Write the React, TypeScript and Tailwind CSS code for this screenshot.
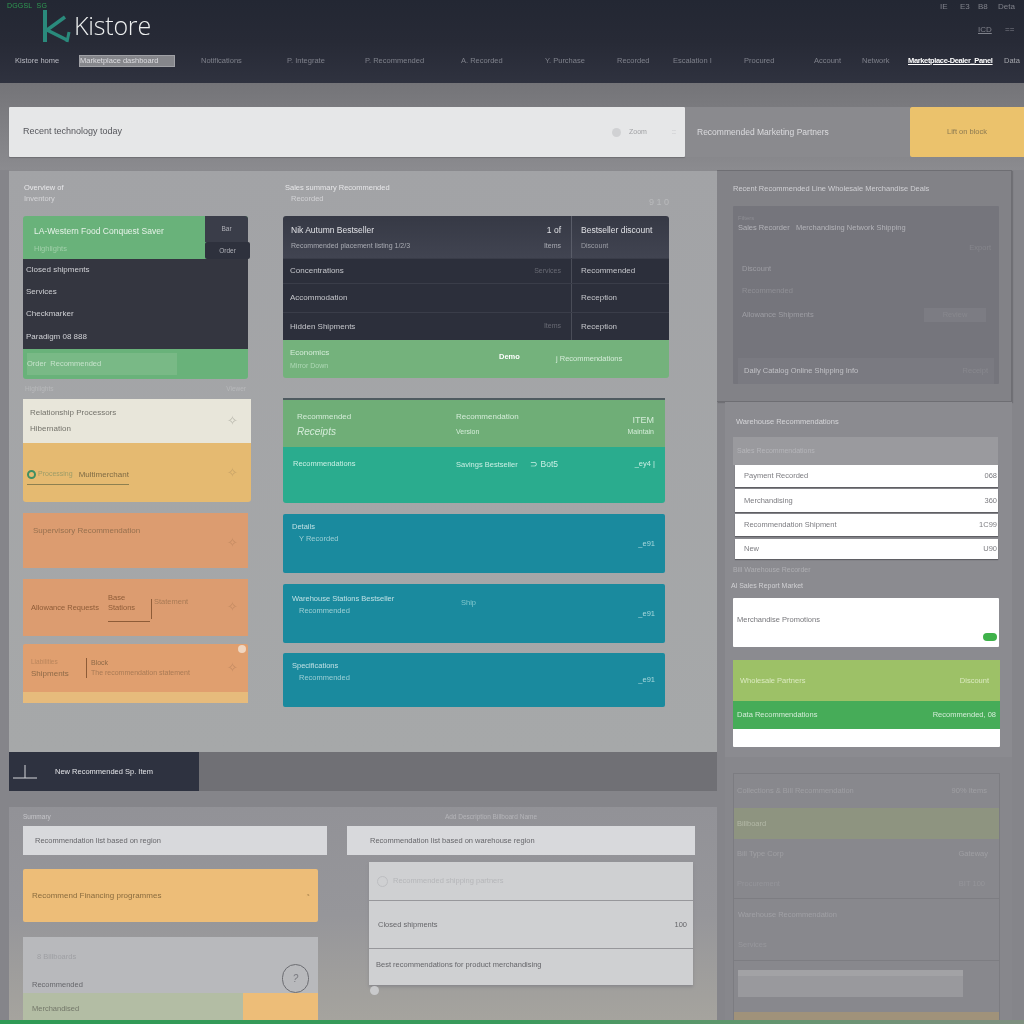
import React from "react";

const nav: [string, string][] = [
  ["Kistore home", "ml-[15px] w-[44px] text-[#b9bac2]"],
  ["Marketplace dashboard", "ml-[20px] w-[96px] h-[12px] leading-[10px] bg-[#85868b] border border-[#a0a1a6] text-[#dcdce0]"],
  ["Notifications", "ml-[26px] w-[59px] text-[#7f818b]"],
  ["P. Integrate", "ml-[27px] w-[52px] text-[#7f818b]"],
  ["P. Recommended", "ml-[26px] w-[66px] text-[#7f818b]"],
  ["A. Recorded", "ml-[30px] w-[54px] text-[#7f818b]"],
  ["Y. Purchase", "ml-[30px] w-[51px] text-[#7f818b]"],
  ["Recorded", "ml-[21px] w-[35px] text-[#7f818b]"],
  ["Escalation I", "ml-[21px] w-[45px] text-[#7f818b]"],
  ["Procured", "ml-[26px] w-[44px] text-[#7f818b]"],
  ["Account", "ml-[26px] w-[32px] text-[#7f818b]"],
  ["Network", "ml-[16px] w-[30px] text-[#7f818b]"],
  ["Marketplace-Dealer_Panel", "ml-[16px] w-[93px] text-white font-bold underline tracking-[-0.35px]"],
  ["Data", "ml-[3px] w-[19px] text-[#a5a6ac]"],
];

function Row({ left, right, className }: { left: string; right?: string; className: string }) {
  return (
    <div className={"flex items-center justify-between " + className}>
      <span className="truncate">{left}</span>
      {right && <span className="shrink-0">{right}</span>}
    </div>
  );
}

function Header() {
  return (
    <header className="h-[83px] shrink-0 flex flex-col bg-gradient-to-b from-[#232733] via-[#272a36] to-[#2f323f]">
      <div className="h-[47px] flex">
        <div className="relative w-[180px]">
          <span className="absolute left-[7px] top-[2px] text-[7px] leading-[8px] text-[#2f9a52] tracking-wide">DGGSL&nbsp;&nbsp;SG</span>
          <svg className="absolute left-[42px] top-[8px]" width="30" height="36" viewBox="0 0 30 36" fill="none">
            <path d="M3 2V34" stroke="#2a8a7c" strokeWidth="4" />
            <path d="M23 9L5 22L25 32" stroke="#2a8a7c" strokeWidth="3.5" />
            <path d="M27 24L25 34" stroke="#2a8a7c" strokeWidth="3" />
          </svg>
          <span className="absolute left-[74px] top-[9px] text-[25px] leading-[32px] text-[#eef0f0] font-['Open_Sans',sans-serif] font-light tracking-[-0.2px]">Kistore</span>
        </div>
        <div className="ml-auto w-[84px] pt-[2px] flex flex-col text-[#80828b] text-[8px] leading-[10px]">
          <div className="flex">
            <span className="w-[20px]">IE</span>
            <span className="w-[18px]">E3</span>
            <span className="w-[20px]">B8</span>
            <span>Deta</span>
          </div>
          <div className="flex mt-[13px] ml-[38px]">
            <span className="w-[27px] underline">ICD</span>
            <span>==</span>
          </div>
        </div>
      </div>
      <nav className="flex items-center h-[26px] pt-[1px] text-[7.5px] leading-[10px] whitespace-nowrap overflow-hidden">
        {nav.map(([t, c], i) => (
          <span key={i} className={"shrink-0 overflow-hidden " + c}>{t}</span>
        ))}
      </nav>
    </header>
  );
}

function SearchRow() {
  return (
    <div className="pt-[24px] pb-[13px] pl-[9px] bg-gradient-to-b from-[#747478] to-[#8b8b8f]">
      <div className="flex h-[50px]">
        <div className="w-[676px] bg-[#e6e7e8] rounded-[1px] flex items-center pl-[14px] text-[9px] text-[#55565b] shadow-[0_1px_1px_#6f6f73]">
          <span className="flex-1 whitespace-nowrap">Recent technology today</span>
          <span className="w-[9px] h-[9px] rounded-full bg-[#d0d1d3] mr-[8px]"></span>
          <span className="text-[#a0a1a4] text-[7px] w-[43px]">Zoom</span>
          <span className="text-[#b5b6b8] text-[7px] w-[13px]">::</span>
        </div>
        <div className="w-[225px] bg-[#8a8a8e] flex items-center pl-[12px] text-[8.5px] text-[#dcdcdf] whitespace-nowrap">Recommended Marketing Partners</div>
        <div className="w-[114px] bg-[#ebc26c] rounded-l-[2px] flex items-center justify-center text-[7.5px] text-[#8c7a52]">Lift on block</div>
      </div>
    </div>
  );
}

function Star() {
  return <span className="text-[13px] leading-[13px] text-[#c58c63]">✧</span>;
}

function LeftColumn() {
  return (
    <div className="w-[228px] flex flex-col">
      <div className="h-[46px] pt-[12px] pl-[1px] text-[7.5px] leading-[11px] text-[#e8e8ea]">
        <div>Overview of</div>
        <div className="text-[#d5d5d8]">Inventory</div>
      </div>
      <div className="w-[225px] h-[163px] flex flex-col rounded-[3px] bg-[#69b27a]">
        <div className="relative h-[43px] pl-[11px] pt-[9px] text-[#e6f2e8] text-[8.5px] leading-[12px]">
          <div className="whitespace-nowrap">LA-Western Food Conquest Saver</div>
          <div className="text-[7.5px] text-[#a0cfa9] mt-[6px]">Highlights</div>
          <div className="absolute right-0 top-0 w-[43px] h-[26px] bg-[#3a3d49] rounded-tr-[3px] flex items-center justify-center text-[6.5px] text-[#b0b1b8]">Bar</div>
          <div className="absolute right-[-2px] top-[26px] w-[45px] h-[17px] bg-[#2e313d] rounded-[2px] flex items-center justify-center text-[6.5px] text-[#b0b1b8]">Order</div>
        </div>
        <div className="h-[90px] bg-[#343640] flex flex-col text-[8px] text-[#d0d1d5] pl-[3px]">
          <div className="h-[22px] flex items-center">Closed shipments</div>
          <div className="h-[22px] flex items-center">Services</div>
          <div className="h-[22px] flex items-center">Checkmarker</div>
          <div className="h-[24px] flex items-center">Paradigm 08 888</div>
        </div>
        <div className="flex-1 pl-[4px] flex items-center text-[7.5px] text-[#c5e2ca]">
          <div className="w-[150px] h-[22px] bg-[#79b986] flex items-center whitespace-nowrap">Order&nbsp;&nbsp;Recommended</div>
        </div>
      </div>
      <div className="h-[20px] flex items-center justify-between pl-[2px] pr-[5px] text-[6.5px] text-[#b8b9bb]">
        <span>Highlights</span>
        <span>Viewer</span>
      </div>
      <div className="h-[44px] bg-[#e8e6da] pl-[7px] pr-[13px] flex items-center justify-between text-[8px] text-[#74736b]">
        <div className="leading-[16px] -mt-[1px]">
          <div>Relationship Processors</div>
          <div>Hibernation</div>
        </div>
        <span className="text-[13px] text-[#bcbbb0]">✧</span>
      </div>
      <div className="h-[59px] bg-[#e5ba71] rounded-b-[3px] pl-[4px] pr-[13px] flex items-center justify-between text-[8px] text-[#7f6b45]">
        <div className="flex items-center gap-[2px] mt-[8px] border-b border-[#8d8050] pb-[3px]">
          <span className="w-[9px] h-[9px] rounded-full border-2 border-[#3f8f63]"></span>
          <span className="text-[#9c9c68] text-[7px]">Processing</span>
          <span className="ml-[4px]">Multimerchant</span>
        </div>
        <span className="text-[13px] text-[#c9a468]">✧</span>
      </div>
      <div className="mt-[11px] h-[55px] w-[225px] bg-[#dc9c70] pl-[10px] pr-[10px] pt-[13px] flex justify-between text-[8px] leading-[10px] text-[#96704f]">
        <span>Supervisory Recommendation</span>
        <span className="mt-[10px]"><Star /></span>
      </div>
      <div className="mt-[11px] h-[57px] w-[225px] bg-[#dc9c70] pl-[8px] pr-[10px] flex items-center text-[8px] text-[#8e5c38]">
        <span className="w-[77px] whitespace-nowrap text-[7.5px]">Allowance Requests</span>
        <div className="w-[42px] border-b border-[#8e5c38] pb-[8px] text-[7.5px] leading-[10px]">
          <div>Base</div>
          <div>Stations</div>
        </div>
        <span className="h-[20px] border-l border-[#8e5c38] ml-[1px] mt-[2px]"></span>
        <span className="ml-[2px] mb-[12px] text-[#a87a55] text-[7.5px]">Statement</span>
        <span className="ml-auto"><Star /></span>
      </div>
      <div className="relative mt-[8px] h-[59px] w-[225px] rounded-t-[2px] bg-[#e09f6f] overflow-hidden flex flex-col">
        <div className="flex-1 pl-[8px] pr-[10px] flex items-center text-[#8e6a48] text-[8px]">
          <div className="w-[55px] leading-[12px]">
            <div className="text-[6.5px] text-[#b9855c]">Liabilities</div>
            <div>Shipments</div>
          </div>
          <div className="border-l border-[#8e5c38] h-[20px] pl-[4px] text-[7px] leading-[10px]">
            <div>Block</div>
            <div className="whitespace-nowrap text-[#a87a55]">The recommendation statement</div>
          </div>
          <span className="ml-auto"><Star /></span>
        </div>
        <div className="h-[11px] bg-[#e6bb7c]"></div>
        <span className="absolute right-[2px] top-[1px] w-[8px] h-[8px] rounded-full bg-[#f0d6c0]"></span>
      </div>
    </div>
  );
}

function TealCard({ title, sub, mid, h, mt, pt }: { title: string; sub: string; mid?: string; h: string; mt: string; pt: string }) {
  return (
    <div className={"relative w-[382px] bg-[#1a8a9e] rounded-[2px] pl-[9px] pr-[10px] flex items-center justify-between text-[7.5px] text-[#bfe0e4] " + h + " " + mt}>
      <div className={"self-start leading-[12px] " + pt}>
        <div>{title}</div>
        <div className="pl-[7px] text-[#9ccfd5]">{sub}</div>
      </div>
      {mid && <span className="absolute left-[178px] top-[13px] text-[#7fc6cd]">{mid}</span>}
      <span className="ml-auto text-[#a9d9dd]">_e91</span>
    </div>
  );
}

function MiddleColumn() {
  return (
    <div className="w-[386px] ml-[32px] flex flex-col">
      <div className="relative h-[46px] pt-[12px] pl-[2px] text-[7.5px] leading-[11px] text-[#e6e6e8]">
        <div>Sales summary Recommended</div>
        <div className="pl-[6px] text-[#d2d2d5]">Recorded</div>
        <span className="absolute right-[-12px] top-[26px] w-[32px] h-[13px] text-[9px] leading-[13px] text-[#b9babc]">9 1 0</span>
      </div>
      <div className="rounded-[3px] overflow-hidden flex flex-col">
        <div className="h-[42px] bg-gradient-to-b from-[#363945] to-[#414451] flex text-[#e0e1e5]">
          <div className="w-[289px] pl-[8px] pt-[7px] pr-[10px] text-[8.5px] leading-[14px] border-r border-[#5a5d69]">
            <Row left="Nik Autumn Bestseller" right="1 of" className="text-[8.5px]" />
            <Row left="Recommended placement listing 1/2/3" right="Items" className="text-[7px] text-[#a9abb3] mt-[2px]" />
          </div>
          <div className="pl-[9px] pt-[7px] text-[8.5px] leading-[14px]">
            <div className="whitespace-nowrap">Bestseller discount</div>
            <div className="text-[7px] text-[#9c9ea6] mt-[2px]">Discount</div>
          </div>
        </div>
        {[
          ["Concentrations", "Services", "Recommended", "h-[25px]"],
          ["Accommodation", "", "Reception", "h-[29px]"],
          ["Hidden Shipments", "Items", "Reception", "h-[28px]"],
        ].map(([a, b, c, h], i) => (
          <div key={i} className={"bg-[#2c2f3b] flex text-[8px] text-[#c5c6cb] border-t border-[#3a3d49] " + h}>
            <div className="w-[289px] pl-[7px] pr-[10px] flex items-center justify-between border-r border-[#4a4d58]">
              <span>{a}</span>
              <span className="text-[#686a74] text-[7px]">{b}</span>
            </div>
            <div className="pl-[9px] flex items-center">{c}</div>
          </div>
        ))}
        <div className="h-[38px] bg-[#74b27c] flex items-center text-[8px] text-[#d4ecd8]">
          <div className="w-[216px] pl-[7px] leading-[13px]">
            <div>Economics</div>
            <div className="text-[7px] text-[#aed8b5]">Mirror Down</div>
          </div>
          <span className="w-[57px] text-white font-bold text-[7.5px] -mt-[5px]">Demo</span>
          <span className="text-[7.5px] whitespace-nowrap">j Recommendations</span>
        </div>
      </div>
      <div className="w-[382px] mt-[20px] h-[49px] bg-[#6fae77] border-t-2 border-[#4f5b60] flex text-[#d4ecd8] text-[8px] leading-[14px] pt-[10px]">
        <div className="w-[160px] pl-[14px]">
          <div>Recommended</div>
          <div className="text-[10px] italic mt-[1px]">Receipts</div>
        </div>
        <div className="flex-1 pl-[13px]">
          <div>Recommendation</div>
          <div className="text-[7px] mt-[1px]">Version</div>
        </div>
        <div className="pr-[11px] text-right text-[7px] leading-[12px] pt-[4px]">
          <div className="text-[9px]">ITEM</div>
          <div>Maintain</div>
        </div>
      </div>
      <div className="w-[382px] h-[56px] bg-[#2aac8e] rounded-b-[3px] flex text-[7.5px] text-[#c9efe4] pt-[11px]">
        <div className="w-[173px] pl-[10px]">Recommendations</div>
        <div className="flex-1 whitespace-nowrap">Savings Bestseller&nbsp;&nbsp;&nbsp;&nbsp;&nbsp;&nbsp;<span className="text-[8.5px]">⊃ Bot5</span></div>
        <span className="pr-[10px]">_ey4 |</span>
      </div>
      <TealCard title="Details" sub="Y Recorded" h="h-[59px]" mt="mt-[11px]" pt="pt-[7px]" />
      <TealCard title="Warehouse Stations Bestseller" sub="Recommended" mid="Ship" h="h-[59px]" mt="mt-[11px]" pt="pt-[9px]" />
      <TealCard title="Specifications" sub="Recommended" h="h-[54px]" mt="mt-[10px]" pt="pt-[7px]" />
    </div>
  );
}

function RightColumn() {
  return (
    <div className="w-[307px] shrink-0 flex flex-col">
      <div className="w-[295px] h-[232px] bg-[#828287] border-t border-r border-[#6e6e73] border-b pl-[16px] pr-[12px] flex flex-col shadow-[1px_1px_1px_#707075]">
        <div className="h-[35px] flex items-center text-[7.5px] text-[#cfcfd3] whitespace-nowrap">Recent Recommended Line Wholesale Merchandise Deals</div>
        <div className="h-[178px] bg-[#75757c] rounded-[1px] flex flex-col px-[5px] text-[7.5px] text-[#9d9da3]">
          <div className="h-[32px] pt-[8px] leading-[9px] text-[#b3b3b8] whitespace-nowrap">
            <div className="text-[6px] text-[#8d8d93]">Filters</div>
            <div>Sales Recorder&nbsp;&nbsp;&nbsp;Merchandising Network Shipping</div>
          </div>
          <div className="h-[20px] flex items-center justify-end pr-[3px] text-[#86868c]">Export</div>
          <div className="h-[22px] flex items-center pl-[4px]">Discount</div>
          <div className="h-[22px] flex items-center pl-[4px] text-[#8f8f95]">Recommended</div>
          <div className="h-[26px] flex items-center justify-between pl-[4px] pr-[8px]">
            <span>Allowance Shipments</span>
            <span className="w-[62px] h-[14px] bg-[#7c7c83] text-center text-[#88888e] leading-[14px]">Review</span>
          </div>
          <div className="h-[30px]"></div>
          <div className="h-[26px] flex items-center justify-between pl-[6px] pr-[6px] bg-[#7a7a81] text-[#c0c0c5]">
            <span className="whitespace-nowrap">Daily Catalog Online Shipping Info</span>
            <span className="text-[#88888e]">Receipt</span>
          </div>
        </div>
      </div>
      <div className="ml-[8px] w-[287px] bg-[#8b8b90] pl-[8px] flex flex-col h-[355px]">
        <div className="h-[35px] pt-[15px] text-[7.5px] leading-[10px] pl-[3px] text-[#d5d5d8]">Warehouse Recommendations</div>
        <div className="w-[265px] h-[28px] bg-[#9a9a9e] flex items-center pl-[4px] text-[7px] text-[#b5b5b9]">Sales Recommendations</div>
        {[
          ["Payment Recorded", "068", "h-[22px]"],
          ["Merchandising", "360", "h-[23px] mt-[2px]"],
          ["Recommendation Shipment", "1C99", "h-[22px] mt-[2px]"],
          ["New", "U90", "h-[20px] mt-[3px]"],
        ].map(([a, b, c], i) => (
          <Row key={i} left={a} right={b} className={"ml-[2px] w-[263px] bg-white pl-[9px] pr-[1px] text-[7.5px] text-[#7c7c80] shadow-[0_1px_1px_#5f5f64] " + c} />
        ))}
        <div className="text-[7px] leading-[10px] mt-[3px] text-[#aeaeb2] h-[15px] flex items-center">Bill Warehouse Recorder</div>
        <div className="text-[7px] leading-[10px] text-[#d0d0d3] mt-[1px] h-[15px] -ml-[2px] flex items-center">Al Sales Report Market</div>
        <div className="relative w-[266px] h-[49px] mt-[5px] bg-white rounded-[1px] pl-[4px] flex items-center text-[7.5px] text-[#77777b]">
          <span className="-mt-[5px]">Merchandise Promotions</span>
          <span className="absolute right-[2px] bottom-[6px] w-[14px] h-[8px] rounded-full bg-[#3fb24a]"></span>
        </div>
        <div className="w-[267px] mt-[13px] flex flex-col">
          <div className="h-[41px] bg-[#9dc167] flex items-center justify-between pl-[7px] pr-[11px] text-[7.5px] text-[#dbeabf]">
            <span>Wholesale Partners</span>
            <span>Discount</span>
          </div>
          <div className="h-[28px] bg-[#46ac58] flex items-center justify-between pl-[4px] pr-[4px] text-[7.5px] text-[#d3ecd7]">
            <span>Data Recommendations</span>
            <span>Recommended, 08</span>
          </div>
          <div className="h-[18px] bg-white rounded-b-[1px]"></div>
        </div>
      </div>
      <div className="ml-[8px] w-[287px] flex-1 bg-[#87878c] pl-[8px] pt-[16px] flex flex-col">
        <div className="w-[267px] flex-1 border border-[#7c7c81] border-b-0 bg-[#88888d] flex flex-col text-[7.5px] text-[#9f9fa3]">
          <Row left="Collections & Bill Recommendation" right="90% Items" className="h-[34px] pl-[3px] pr-[12px]" />
          <div className="h-[31px] bg-[#8e9480] flex items-center pl-[3px] text-[#b3b8a6]">Billboard</div>
          <Row left="Bill Type Corp" right="Gateway" className="h-[30px] pl-[3px] pr-[11px]" />
          <Row left="Procurement" right="BIT 100" className="h-[30px] pl-[3px] pr-[14px] border-b border-[#7d7d82] text-[#95959a]" />
          <div className="h-[31px] flex items-center pl-[4px] text-[#a0a0a5]">Warehouse Recommendation</div>
          <div className="h-[31px] flex items-center pl-[4px] border-b border-[#7d7d82] text-[#97979c]">Services</div>
          <div className="w-[225px] h-[27px] ml-[4px] mt-[9px] bg-[#99999d] border-t-[6px] border-[#a2a2a5]"></div>
          <div className="h-[10px] mt-[15px] bg-[#a0927a]"></div>
        </div>
      </div>
    </div>
  );
}

function BottomPanel() {
  return (
    <div className="relative mt-[16px] w-[708px] flex-1 bg-gradient-to-b from-[#929297] via-[#96969a] to-[#a6a49e] flex px-[14px] overflow-hidden">
      <div className="w-[304px] flex flex-col">
        <div className="h-[19px] flex items-center text-[6.5px] text-[#c5c5c9]">Summary</div>
        <div className="h-[29px] bg-[#d8d9dc] flex items-center pl-[12px] text-[7.5px] text-[#66666a] whitespace-nowrap">Recommendation list based on region</div>
        <div className="w-[295px] h-[53px] mt-[14px] bg-[#edbd78] rounded-[2px] pl-[9px] pr-[8px] flex items-center justify-between text-[8px] text-[#8a6c3f]">
          <span className="whitespace-nowrap">Recommend Financing programmes</span>
          <span className="text-[#b58f55]">◔</span>
        </div>
        <div className="relative w-[295px] h-[87px] mt-[15px] bg-[#b8b9bc] flex flex-col text-[7.5px]">
          <div className="h-[40px] pl-[14px] flex items-center text-[#9e9fa3]">8 Billboards</div>
          <div className="h-[16px] pl-[9px] flex items-center text-[#66676b]">Recommended</div>
          <div className="flex-1 flex">
            <div className="w-[220px] bg-[#b3bda4] pl-[9px] flex items-center text-[#74786a]">Merchandised</div>
            <div className="flex-1 bg-[#edbd78]"></div>
          </div>
          <span className="absolute right-[9px] top-[27px] w-[27px] h-[29px] rounded-full border border-[#6c6d72] flex items-center justify-center italic text-[#7a7b80] text-[10px]">?</span>
        </div>
      </div>
      <div className="ml-[20px] w-[348px] flex flex-col">
        <div className="h-[19px] flex items-center justify-center pr-[60px] text-[6.5px] text-[#b5b5b9]">Add Description Billboard Name</div>
        <div className="h-[29px] bg-[#d8d9dc] flex items-center pl-[23px] text-[7.5px] text-[#66666a] whitespace-nowrap">Recommendation list based on warehouse region</div>
        <div className="ml-[22px] w-[324px] h-[123px] mt-[7px] bg-[#cfd0d2] flex flex-col text-[7.5px] shadow-[0_2px_3px_#88888c]">
          <div className="h-[39px] border-b border-[#97979b] pl-[8px] flex items-center text-[#b5b6b9] gap-[5px]">
            <span className="w-[11px] h-[11px] rounded-full border border-[#bdbec1]"></span>
            Recommended shipping partners
          </div>
          <Row left="Closed shipments" right="100" className="h-[48px] border-b border-[#97979b] pl-[9px] pr-[6px] text-[#66666a]" />
          <div className="h-[36px] pl-[7px] pt-[10px] text-[#66666a] whitespace-nowrap">Best recommendations for product merchandising</div>
        </div>
        <span className="ml-[23px] mt-[1px] w-[9px] h-[9px] rounded-full bg-[#c9cacc]"></span>
      </div>
    </div>
  );
}

export default function App() {
  return (
    <div className="relative w-[1024px] h-[1024px] overflow-hidden flex flex-col bg-[#85858a] font-['Liberation_Sans',sans-serif] blur-[0.35px]">
      <Header />
      <SearchRow />
      <div className="flex flex-1 min-h-0">
        <div className="ml-[9px] w-[708px] flex flex-col">
          <div className="h-[582px] bg-gradient-to-b from-[#a2a3a6] to-[#a6a8a9] shadow-[inset_0_1px_0_#8a8a8e] flex pl-[14px]">
            <LeftColumn />
            <MiddleColumn />
          </div>
          <div className="h-[39px] flex bg-[#707075]">
            <div className="w-[190px] bg-[#2e3240] flex items-center text-[7.5px] text-[#e2e3e6]">
              <svg className="ml-[3px] mr-[17px]" width="26" height="16" viewBox="0 0 26 16" fill="none">
                <path d="M13 1V14M1 14H25" stroke="#d5d6da" strokeWidth="1" />
              </svg>
              <span className="whitespace-nowrap">New Recommended Sp. Item</span>
            </div>
          </div>
          <BottomPanel />
        </div>
        <RightColumn />
      </div>
      <div className="absolute bottom-0 left-0 right-0 h-[4px] bg-gradient-to-r from-[#2f9a55] via-[#3a9a5c] to-[#7f8f80]"></div>
    </div>
  );
}
